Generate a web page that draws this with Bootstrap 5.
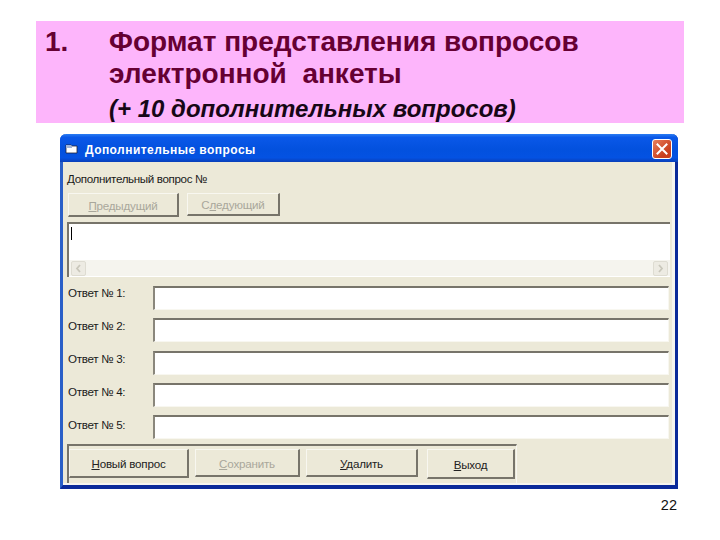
<!DOCTYPE html>
<html lang="ru"><head><meta charset="utf-8"><title>Формат</title>
<link href="https://cdn.jsdelivr.net/npm/bootstrap@5.3.0/dist/css/bootstrap.min.css" rel="stylesheet">
<style>
html,body{margin:0;background:#fff;width:720px;height:540px;overflow:hidden;font-family:"Liberation Sans",Arial,sans-serif}
.slide{width:720px;height:540px;padding:21px 0 0 36px}
.band{width:648px;height:102px;background:#fdb5fb;padding:5px 0 0 9px;color:#660033;font-weight:700;font-size:28px;line-height:32px}
.band-num{width:64px;flex:none}
.band-sub{font-size:24px;font-style:italic;color:#170716;line-height:28px;margin-top:5px}
.xpwin{width:618px;height:355px;margin:11px 0 0 24px;border-left:3px solid #2a5fc8;border-right:3px solid #0a2a9a;border-bottom:4px solid #0a2a9a;border-radius:6px 6px 0 0}
.xpbar{height:28px;margin:0 -3px;padding:2px 6px 0 5px;border-radius:6px 6px 0 0;background:linear-gradient(#2a7cf2 0,#0a58e8 12%,#0351de 55%,#0452e2 85%,#0a3fb8 100%);color:#fff;font-weight:700;font-size:12px;letter-spacing:.45px}
.xptitle{padding-top:2px}
.titleicon{margin-right:6px}
.xpclose{width:20px;height:20px;border:1px solid #fff;border-radius:3px;background:linear-gradient(135deg,#e9805d,#c9401f 70%);display:flex;align-items:center;justify-content:center}
.xpbody{height:323px;background:#ece9d8;padding:9px 0 0 4px;font-size:11.6px;color:#1a1a1a;position:relative;border-right:3px solid #f6f5ef;border-bottom:2px solid #f6f5ef}
.qlabel{height:16px;line-height:16px;letter-spacing:-.35px}
.btnrow{margin:6px 0 0 1px;align-items:flex-start}
.xpbtn.btn{background:#ece9d8;border:1px solid;border-color:#f8f7f0 #77746a #77746a #f8f7f0;border-width:1px 2px 2px 1px;border-radius:0;font-size:11.6px;letter-spacing:-.2px;color:#222;padding:2px 0 0;line-height:1;display:flex;align-items:center;justify-content:center}
.xpbtn.btn:hover{background:#ece9d8;color:#222;border-color:#f8f7f0 #77746a #77746a #f8f7f0}
.muted-t{color:#a9a79b}
.b-prev{width:111px;height:24px}
.b-next{width:93px;height:23px}
.qbox{margin:5px 0 0 0;width:603px;height:55px;background:#fff;border-top:2px solid #77746a;border-left:2px solid #77746a;position:relative;padding:3px 0 0 2px}
.caret-bar{display:block;width:1px;height:13px;background:#000}
.hscroll{position:absolute;left:0;right:0;bottom:1px;height:16px;background:#f5f4ee;display:flex;justify-content:space-between;padding:1px 2px}
.sb{width:15px;height:15px;background:#edebe3;border:1px solid #dedcd2;border-radius:2px;display:flex;align-items:center;justify-content:center}
.answers{margin-top:9px;padding-left:1px}
.labelcol{width:85px;flex:none;margin-top:-10px}
.alabel{display:block;height:33px;line-height:33px;letter-spacing:-.3px}
.abox.form-control{display:block;width:516px;height:24px;margin-bottom:8.25px;border:0;border-top:2px solid #77746a;border-left:2px solid #8a877c;border-right:1px solid #f8f7f0;border-bottom:1px solid #f8f7f0;border-radius:0;padding:0;background:#fff;box-shadow:none}
.frame{position:absolute;left:4px;top:282px;width:450px;height:39px;border-top:2px solid #77746a;border-left:2px solid #77746a;padding:3px 0 0 0;border-right:1px solid #f7f6f0;gap:6px;align-items:flex-start}
.b-a{width:120px;height:29px}.b-b{width:105px;height:28px}.b-c{width:112px;height:28px}.b-d{width:88px;height:30px;margin-left:3px}
.pgnum{width:641px;text-align:right;font-size:14.5px;line-height:16px;margin-top:8px;color:#111}
u{text-underline-offset:1px}
</style></head>
<body>
<div class="slide">
 <div class="band d-flex">
  <div class="band-num">1.</div>
  <div>
   <div>Формат представления вопросов</div>
   <div>электронной&nbsp; анкеты</div>
   <div class="band-sub">(+ 10 дополнительных вопросов)</div>
  </div>
 </div>
 <div class="xpwin">
  <div class="xpbar d-flex align-items-center">
   <svg width="14" height="12" viewBox="0 0 14 12" class="titleicon"><path d="M1 2h5l1 1h5v7H1z" fill="#fff" stroke="#223" stroke-width=".8"/><path d="M1 2h5l1 1v2H1z" fill="#9fb4d8"/></svg>
   <span class="xptitle">Дополнительные вопросы</span>
   <div class="xpclose ms-auto"><svg width="12" height="12" viewBox="0 0 12 12"><path d="M1.5 1.5l9 9M10.5 1.5l-9 9" stroke="#fff" stroke-width="2" stroke-linecap="square"/></svg></div>
  </div>
  <div class="xpbody">
   <div class="qlabel">Дополнительный вопрос №</div>
   <div class="d-flex btnrow gap-2">
    <button class="btn xpbtn b-prev" type="button"><span class="muted-t"><u>П</u>редыдущий</span></button>
    <button class="btn xpbtn b-next" type="button"><span class="muted-t">С<u>л</u>едующий</span></button>
   </div>
   <div class="qbox"><span class="caret-bar"></span>
    <div class="hscroll"><span class="sb"><svg width="7" height="9" viewBox="0 0 7 9"><path d="M5 1L2 4.5 5 8" fill="none" stroke="#c9c7bb" stroke-width="1.8"/></svg></span><span class="sb"><svg width="7" height="9" viewBox="0 0 7 9"><path d="M2 1l3 3.5L2 8" fill="none" stroke="#c9c7bb" stroke-width="1.8"/></svg></span></div>
   </div>
   <div class="answers d-flex align-items-start">
    <div class="labelcol">
     <span class="alabel">Ответ № 1:</span>
     <span class="alabel">Ответ № 2:</span>
     <span class="alabel">Ответ № 3:</span>
     <span class="alabel">Ответ № 4:</span>
     <span class="alabel">Ответ № 5:</span>
    </div>
    <div>
     <input class="form-control abox" type="text" aria-label="Ответ 1">
     <input class="form-control abox" type="text" aria-label="Ответ 2">
     <input class="form-control abox" type="text" aria-label="Ответ 3">
     <input class="form-control abox" type="text" aria-label="Ответ 4">
     <input class="form-control abox" type="text" aria-label="Ответ 5">
    </div>
   </div>
   <div class="frame d-flex">
    <button class="btn xpbtn b-a" type="button"><span><u>Н</u>овый вопрос</span></button>
    <button class="btn xpbtn b-b" type="button"><span class="muted-t"><u>С</u>охранить</span></button>
    <button class="btn xpbtn b-c" type="button"><span><u>У</u>далить</span></button>
    <button class="btn xpbtn b-d" type="button"><span><u>В</u>ыход</span></button>
   </div>
  </div>
 </div>
 <div class="pgnum">22</div>
</div>
<script src="https://cdn.jsdelivr.net/npm/bootstrap@5.3.0/dist/js/bootstrap.bundle.min.js"></script>
</body></html>
